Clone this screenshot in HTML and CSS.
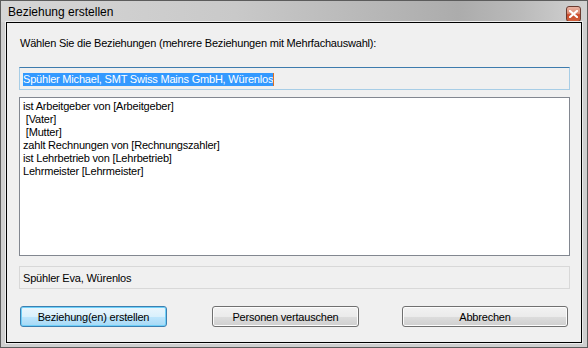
FILE: index.html
```html
<!DOCTYPE html>
<html lang="de">
<head>
    <meta charset="UTF-8">
    <title>Beziehung erstellen</title>
    <link rel="stylesheet" href="styles.css">
</head>
<body>
    <div class="window">
        <div class="titlebar">
            <span class="title">Beziehung erstellen</span>
            <span class="close-btn">
                <svg width="9" height="8" viewBox="0 0 9 8">
                    <path d="M1 1 L8 7 M8 1 L1 7" stroke="#fff" stroke-width="2.2" stroke-linecap="square"/>
                </svg>
            </span>
        </div>

        <div class="client">
            <div class="prompt">Wählen Sie die Beziehungen (mehrere Beziehungen mit Mehrfachauswahl):</div>

            <div class="textbox focused">
                <span class="selected">Spühler Michael, SMT Swiss Mains GmbH, Würenlos</span><span class="caret"></span>
            </div>

            <div class="listbox">
                <div class="item">ist Arbeitgeber von [Arbeitgeber]</div>
                <div class="item">&nbsp;[Vater]</div>
                <div class="item">&nbsp;[Mutter]</div>
                <div class="item">zahlt Rechnungen von [Rechnungszahler]</div>
                <div class="item">ist Lehrbetrieb von [Lehrbetrieb]</div>
                <div class="item">Lehrmeister [Lehrmeister]</div>
            </div>

            <div class="textbox plain">Spühler Eva, Würenlos</div>

            <div class="buttons">
                <button class="btn default">Beziehung(en) erstellen</button>
                <button class="btn swap">Personen vertauschen</button>
                <button class="btn cancel">Abbrechen</button>
            </div>
        </div>
    </div>
</body>
</html>
```

FILE: styles.css
```css
body {
    margin: 0;
    font-family: "Liberation Sans", Arial, sans-serif;
    font-size: 11px;
    background: #fff;
}
.window {
    width: 588px;
    height: 348px;
    box-sizing: border-box;
    border: 1px solid #5c5c5c;
    background: #cfcfcf;
    display: flex;
    flex-direction: column;
}
.titlebar {
    height: 21px;
    display: flex;
    align-items: center;
    padding: 0 6px 0 7px;
    background: linear-gradient(to right, #d6d6d6 0%, #c9c9c9 40%, #acacac 78%, #b9b9b9 88%, #d2d2d2 100%);
}
.title {
    flex: 1;
    font-size: 12px;
    color: #000;
    padding-top: 1px;
}
.close-btn {
    width: 13px;
    height: 14px;
    margin-top: 4px;
    border: 1px solid #6b3b30;
    border-radius: 3px;
    background: linear-gradient(to bottom, #eab3a3 0%, #de8a72 45%, #c9482a 55%, #d0603c 100%);
    display: flex;
    align-items: center;
    justify-content: center;
}
.client {
    margin: 0 5px 4px 5px;
    flex: 1;
    border: 1px solid #000;
    box-shadow: 0 0 0 1px #ececec;
    background: #f0f0f0;
    padding: 14px 11px 0 12px;
    display: flex;
    flex-direction: column;
    letter-spacing: -0.2px;
}
.prompt {
    line-height: 13px;
    padding-left: 1px;
}
.textbox {
    height: 23px;
    box-sizing: border-box;
    margin-top: 17px;
    padding: 2px 2px 0 3px;
    line-height: 13px;
    background: #f0f0f0;
    display: flex;
    align-items: center;
}
.textbox.focused {
    border: 1px solid #a7cde6;
    border-top-color: #3d7bad;
}
.textbox.plain {
    margin-top: 10px;
    border: 1px solid #d8d8d8;
    width: 551px;
}
.selected {
    background: #3399ff;
    color: #fff;
}
.caret {
    width: 1px;
    height: 13px;
    background: #e07020;
}
.listbox {
    margin-top: 7px;
    height: 159px;
    width: 551px;
    box-sizing: border-box;
    border: 1px solid #828790;
    background: #fff;
    padding: 2px 3px;
}
.item {
    line-height: 13px;
    white-space: pre;
}
.buttons {
    display: flex;
    margin-top: 17px;
    padding-left: 1px;
}
.btn {
    height: 21px;
    box-sizing: border-box;
    font-family: inherit;
    font-size: 11px;
    letter-spacing: -0.2px;
    color: #000;
    border: 1px solid #707070;
    border-radius: 3px;
    padding: 0;
    background: linear-gradient(to bottom, #f2f2f2 0%, #ebebeb 50%, #dddddd 50%, #cfcfcf 100%);
    box-shadow: inset 0 0 0 1px #fcfcfc;
}
.btn.default {
    width: 147px;
    border-color: #3c7fb1;
    background: linear-gradient(to bottom, #eaf6fd 0%, #d9f0fc 50%, #bee6fd 50%, #a7d9f5 100%);
    box-shadow: inset 0 0 0 1px #6fd0f8;
}
.btn.swap {
    width: 147px;
    margin-left: 45px;
}
.btn.cancel {
    width: 166px;
    margin-left: 43px;
}
```
